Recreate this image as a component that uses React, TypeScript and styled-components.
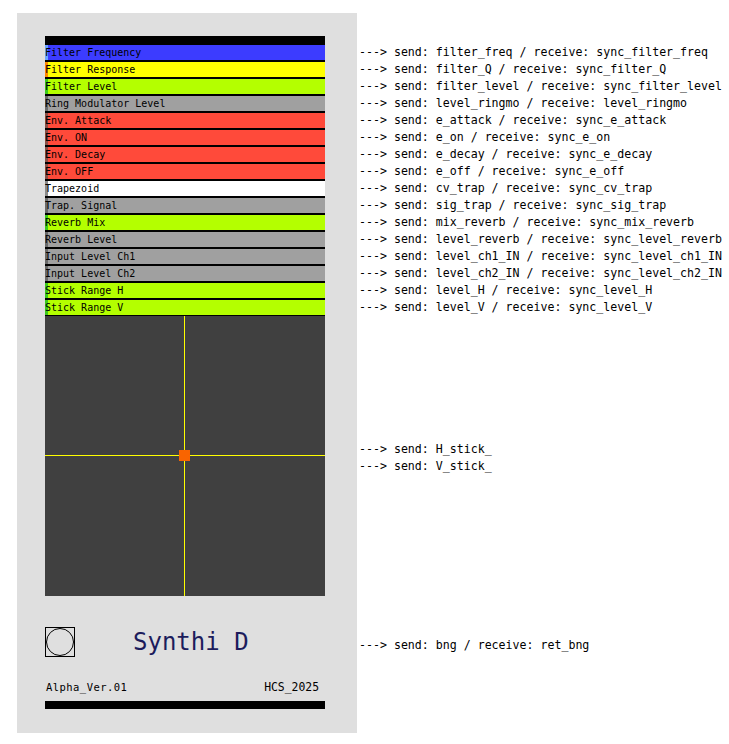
import React from "react";
import styled, { createGlobalStyle } from "styled-components";

const Global = createGlobalStyle`
  html, body { margin: 0; padding: 0; background: #ffffff; }
  body { font-family: "DejaVu Sans Mono", monospace; }
`;

const Page = styled.div`
  display: flex;
  align-items: flex-start;
  padding: 13px 0 0 17px;
`;

const Panel = styled.div`
  width: 340px;
  height: 720px;
  box-sizing: border-box;
  background: #dfdfdf;
  padding: 23px 32px 0 28px;
  display: flex;
  flex-direction: column;
`;

const SliderStack = styled.div`
  background: #000;
  display: flex;
  flex-direction: column;
  gap: 2px;
  padding: 9px 0 1px 0;
  width: 280px;
`;

const Row = styled.div<{ $bg: string; $knob: string }>`
  position: relative;
  height: 15px;
  background: ${(p) => p.$bg};
  font-size: 10px;
  line-height: 15px;
  color: #000;
  white-space: nowrap;
  &::before {
    content: "";
    position: absolute;
    left: 0;
    top: 0;
    width: 3px;
    height: 15px;
    background: ${(p) => p.$knob};
  }
`;

const Label = styled.span`
  position: relative;
`;

const Pad = styled.div`
  position: relative;
  width: 280px;
  height: 280px;
  background: #404040;
`;

const VLine = styled.div`
  position: absolute;
  left: 139px;
  top: 0;
  width: 1px;
  height: 100%;
  background: #ffff00;
`;

const HLine = styled.div`
  position: absolute;
  top: 139px;
  left: 0;
  height: 1px;
  width: 100%;
  background: #ffff00;
`;

const Handle = styled.div`
  position: absolute;
  left: 134px;
  top: 134px;
  width: 11px;
  height: 11px;
  background: #f96400;
`;

const BngRow = styled.div`
  display: flex;
  align-items: center;
  margin-top: 31px;
  height: 30px;
`;

const Bng = styled.div`
  width: 30px;
  height: 30px;
  box-sizing: border-box;
  border: 1px solid #000;
  display: flex;
  align-items: center;
  justify-content: center;
`;

const Circle = styled.div`
  width: 28px;
  height: 28px;
  box-sizing: border-box;
  border: 1px solid #000;
  border-radius: 50%;
`;

const Title = styled.div`
  margin-left: 58px;
  font-size: 24px;
  color: #1c1c5c;
  line-height: 30px;
`;

const InfoRow = styled.div`
  display: flex;
  justify-content: space-between;
  align-items: center;
  margin-top: 23px;
  height: 14px;
  color: #000;
  padding: 0 6px 0 1px;
`;

const InfoText = styled.span<{ $size: number; $spacing?: number }>`
  font-size: ${(p) => p.$size}px;
  letter-spacing: ${(p) => p.$spacing ?? 0}px;
  line-height: 14px;
`;

const BottomBar = styled.div`
  margin-top: 7px;
  height: 8px;
  background: #000;
`;

const Notes = styled.div`
  display: flex;
  flex-direction: column;
  padding: 31px 0 0 2px;
  font-size: 11.6px;
  line-height: 17px;
  color: #000;
  white-space: nowrap;
`;

const Note = styled.div<{ $gap?: number }>`
  height: 17px;
  margin-top: ${(p) => p.$gap ?? 0}px;
`;

const sliders: { label: string; bg: string; knob: string }[] = [
  { label: "Filter Frequency", bg: "#3c3cff", knob: "#6aa4ff" },
  { label: "Filter Response", bg: "#ffff00", knob: "#ff8a00" },
  { label: "Filter Level", bg: "#b4ff00", knob: "#3cc81c" },
  { label: "Ring Modulator Level", bg: "#a0a0a0", knob: "#6a6a6a" },
  { label: "Env. Attack", bg: "#ff4a3a", knob: "#8a5048" },
  { label: "Env. ON", bg: "#ff4a3a", knob: "#8a5048" },
  { label: "Env. Decay", bg: "#ff4a3a", knob: "#8a5048" },
  { label: "Env. OFF", bg: "#ff4a3a", knob: "#8a5048" },
  { label: "Trapezoid", bg: "#ffffff", knob: "#8a8a8a" },
  { label: "Trap. Signal", bg: "#a0a0a0", knob: "#6a6a6a" },
  { label: "Reverb Mix", bg: "#b4ff00", knob: "#3cc81c" },
  { label: "Reverb Level", bg: "#a0a0a0", knob: "#6a6a6a" },
  { label: "Input Level Ch1", bg: "#a0a0a0", knob: "#6a6a6a" },
  { label: "Input Level Ch2", bg: "#a0a0a0", knob: "#6a6a6a" },
  { label: "Stick Range H", bg: "#b4ff00", knob: "#3cc81c" },
  { label: "Stick Range V", bg: "#b4ff00", knob: "#3cc81c" },
];

const notes: string[] = [
  "send: filter_freq / receive: sync_filter_freq",
  "send: filter_Q / receive: sync_filter_Q",
  "send: filter_level / receive: sync_filter_level",
  "send: level_ringmo / receive: level_ringmo",
  "send: e_attack / receive: sync_e_attack",
  "send: e_on / receive: sync_e_on",
  "send: e_decay / receive: sync_e_decay",
  "send: e_off / receive: sync_e_off",
  "send: cv_trap / receive: sync_cv_trap",
  "send: sig_trap / receive: sync_sig_trap",
  "send: mix_reverb / receive: sync_mix_reverb",
  "send: level_reverb / receive: sync_level_reverb",
  "send: level_ch1_IN / receive: sync_level_ch1_IN",
  "send: level_ch2_IN / receive: sync_level_ch2_IN",
  "send: level_H / receive: sync_level_H",
  "send: level_V / receive: sync_level_V",
];

export default function App() {
  return (
    <>
      <Global />
      <Page>
        <Panel>
          <SliderStack>
            {sliders.map((s) => (
              <Row key={s.label} $bg={s.bg} $knob={s.knob}>
                <Label>{s.label}</Label>
              </Row>
            ))}
          </SliderStack>
          <Pad>
            <VLine />
            <HLine />
            <Handle />
          </Pad>
          <BngRow>
            <Bng>
              <Circle />
            </Bng>
            <Title>Synthi D</Title>
          </BngRow>
          <InfoRow>
            <InfoText $size={10.5} $spacing={0.45}>Alpha_Ver.01</InfoText>
            <InfoText $size={11.4}>HCS_2025</InfoText>
          </InfoRow>
          <BottomBar />
        </Panel>
        <Notes>
          {notes.map((n) => (
            <Note key={n}>{"---> " + n}</Note>
          ))}
          <Note $gap={125}>{"---> send: H_stick_"}</Note>
          <Note>{"---> send: V_stick_"}</Note>
          <Note $gap={162}>{"---> send: bng / receive: ret_bng"}</Note>
        </Notes>
      </Page>
    </>
  );
}
